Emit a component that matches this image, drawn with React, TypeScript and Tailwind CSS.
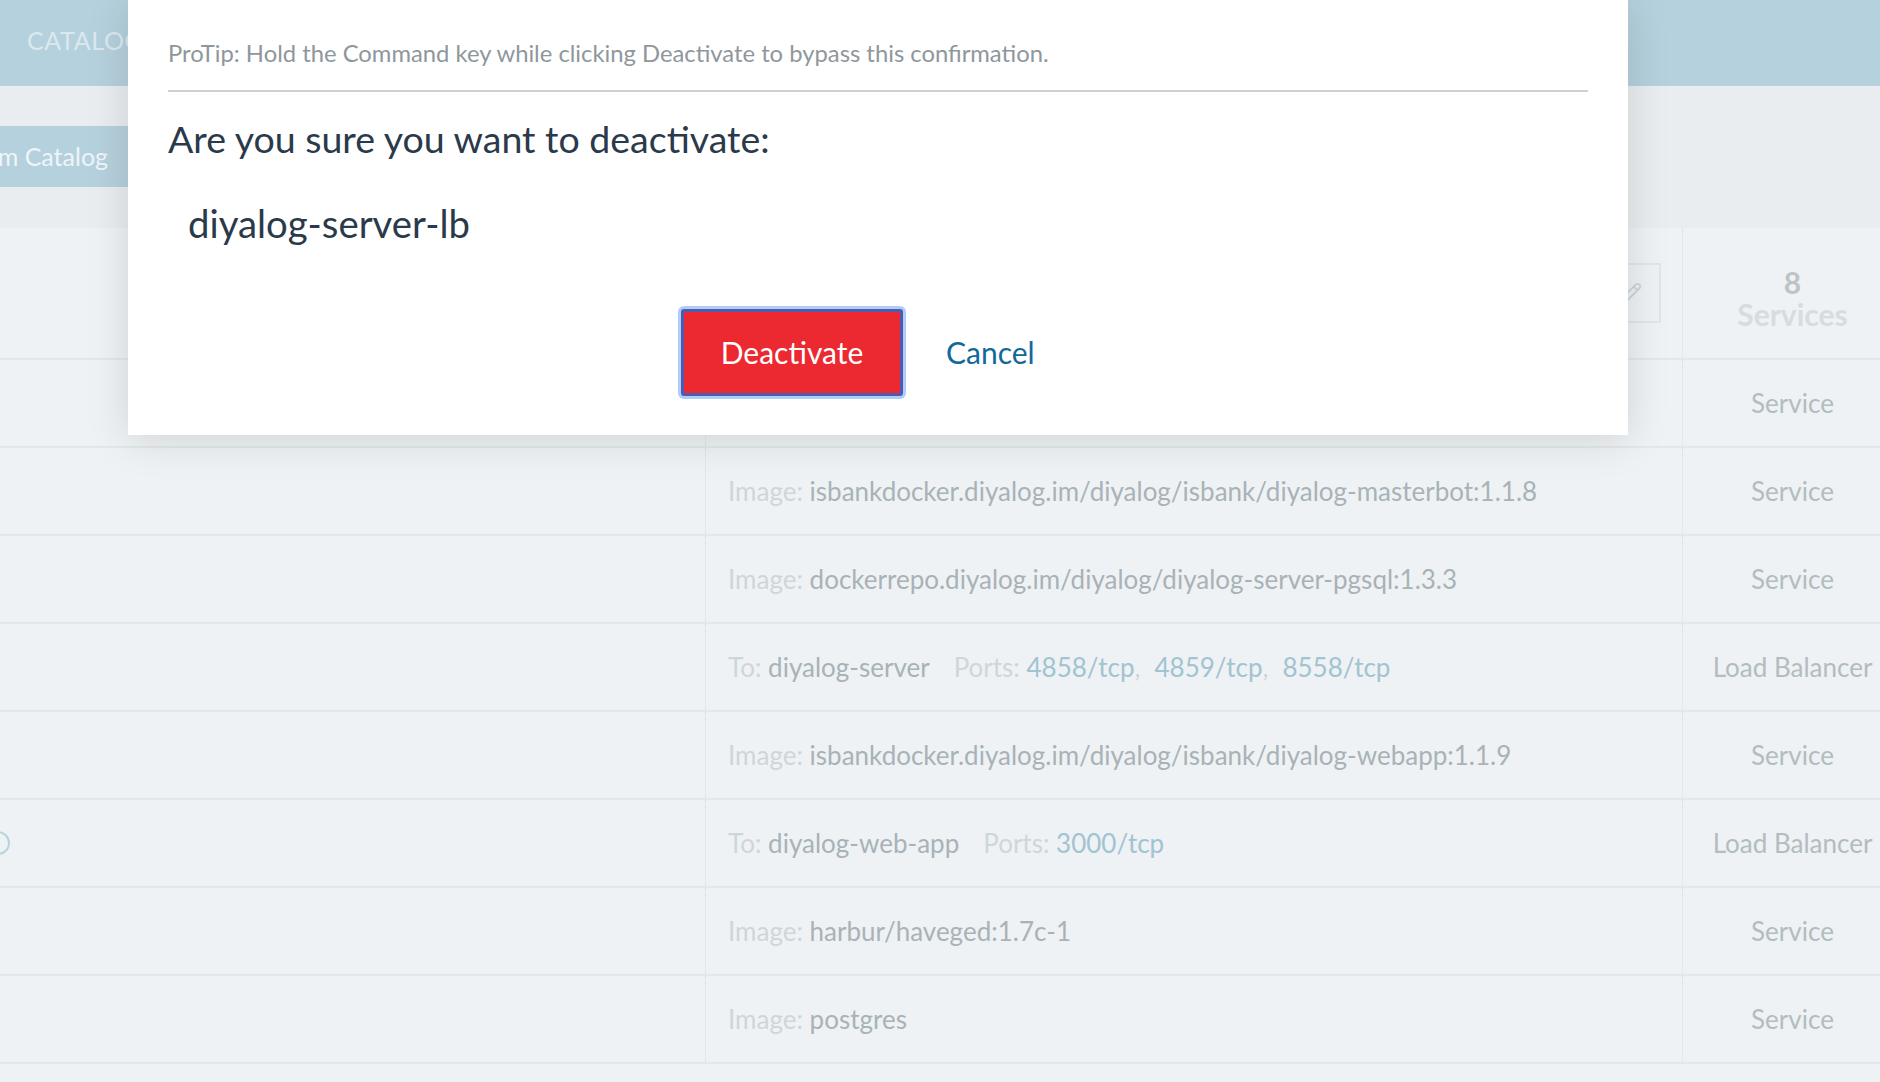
import { Pencil } from 'lucide-react';

type Row = {
  kind: 'image' | 'lb';
  image?: string;
  to?: string;
  ports?: string[];
  type: string;
  marker?: boolean;
};

const rows: Row[] = [
  { kind: 'image', image: '', type: 'Service' },
  { kind: 'image', image: 'isbankdocker.diyalog.im/diyalog/isbank/diyalog-masterbot:1.1.8', type: 'Service' },
  { kind: 'image', image: 'dockerrepo.diyalog.im/diyalog/diyalog-server-pgsql:1.3.3', type: 'Service' },
  { kind: 'lb', to: 'diyalog-server', ports: ['4858/tcp', '4859/tcp', '8558/tcp'], type: 'Load Balancer' },
  { kind: 'image', image: 'isbankdocker.diyalog.im/diyalog/isbank/diyalog-webapp:1.1.9', type: 'Service' },
  { kind: 'lb', to: 'diyalog-web-app', ports: ['3000/tcp'], type: 'Load Balancer', marker: true },
  { kind: 'image', image: 'harbur/haveged:1.7c-1', type: 'Service' },
  { kind: 'image', image: 'postgres', type: 'Service' },
];

function ServiceRow({ row }: { row: Row }) {
  return (
    <div className="grid h-[88px] grid-cols-[705px_977px_220px] border-b-2 border-[#e2e7e9]">
      <div className="flex items-center">
        {row.marker && (
          <span className="-ml-[14px] block h-[24px] w-[24px] rounded-full border-2 border-[#b9d3de]" />
        )}
      </div>
      <div className="flex items-center border-l border-dotted border-[#d6dde0] pl-[22px] text-[26px]">
        {row.kind === 'image' && row.image !== '' && (
          <span>
            <span className="text-[#cfd6d9]">Image: </span>
            <span className="text-[#a9b2b7]">{row.image}</span>
          </span>
        )}
        {row.kind === 'lb' && (
          <span>
            <span className="text-[#cfd6d9]">To: </span>
            <span className="text-[#a9b2b7]">{row.to}</span>
            <span className="ml-[24px] text-[#cfd6d9]">Ports: </span>
            {row.ports?.map((p, i) => (
              <span key={p}>
                <span className="text-[#a2c3d2]">{p}</span>
                {i < (row.ports?.length ?? 0) - 1 && <span className="mr-[14px] text-[#cfd6d9]">,</span>}
              </span>
            ))}
          </span>
        )}
      </div>
      <div className="flex items-center justify-center border-l border-dotted border-[#d6dde0] text-[26px] text-[#b3bcc0]">
        {row.type}
      </div>
    </div>
  );
}

export default function App() {
  return (
    <div className="relative h-[1082px] w-[1880px] overflow-hidden bg-[#e9edef] font-['Lato',sans-serif]">
      {/* top nav */}
      <div className="flex h-[86px] items-center bg-[#b5d1dd] pb-[4px] pl-[27px]">
        <span className="text-[25px] tracking-wide text-[#dbe9ef]">CATALOG</span>
      </div>

      {/* stack header */}
      <div className="h-[142px] pt-[40px]">
        <div className="flex h-[61px] w-[128px] items-center justify-end overflow-hidden whitespace-nowrap bg-[#b5d1dd] pr-[20px] text-[25px] text-[#eef5f8]">
          <span>m Catalog</span>
        </div>
      </div>

      {/* services table */}
      <div className="w-[1902px] bg-[#eef2f4]">
        <div className="grid h-[132px] grid-cols-[705px_977px_220px] border-b-2 border-[#e2e7e9]">
          <div />
          <div className="flex items-center justify-end border-l border-dotted border-[#d6dde0] pr-[21px]">
            <div className="flex h-[60px] w-[60px] items-center justify-center border-2 border-[#dfe5e8]">
              <Pencil className="h-[22px] w-[22px] text-[#cdd4d8]" strokeWidth={2} />
            </div>
          </div>
          <div className="flex flex-col items-center justify-center border-l border-dotted border-[#d6dde0] pt-[10px] text-[30px] leading-[32px]">
            <span className="font-bold text-[#bcc4c8]">8</span>
            <span className="font-bold text-[#d6dcdf]">Services</span>
          </div>
        </div>
        {rows.map((r, i) => (
          <ServiceRow key={i} row={r} />
        ))}
        <div className="h-[40px]" />
      </div>

      {/* confirm modal */}
      <div className="absolute left-[128px] top-0 w-[1500px] bg-white px-[40px] pb-[39px] pt-[38px] shadow-[0_4px_40px_rgba(0,0,0,0.13)]">
        <p className="text-[23.8px] leading-[30px] text-[#8e979c]">
          ProTip: Hold the Command key while clicking Deactivate to bypass this confirmation.
        </p>
        <div className="mt-[22px] h-[2px] bg-[#cbd2d6]" />
        <h2 className="mt-[25px] text-[37.5px] leading-[44px] text-[#2a3a4b]">
          Are you sure you want to deactivate:
        </h2>
        <div className="ml-[20px] mt-[40px] text-[38.3px] leading-[44px] text-[#2a3a4b]">diyalog-server-lb</div>
        <div className="mt-[64px] flex items-center pl-[513px]">
          <button className="flex h-[87px] w-[222px] items-center justify-center rounded-[3px] border-[3px] border-[#4d5cb2] bg-[#ec2830] text-[30px] text-white shadow-[0_0_0_3px_rgba(125,170,240,0.6)]">
            Deactivate
          </button>
          <span className="ml-[43px] text-[30px] text-[#11699a]">Cancel</span>
        </div>
      </div>
    </div>
  );
}
